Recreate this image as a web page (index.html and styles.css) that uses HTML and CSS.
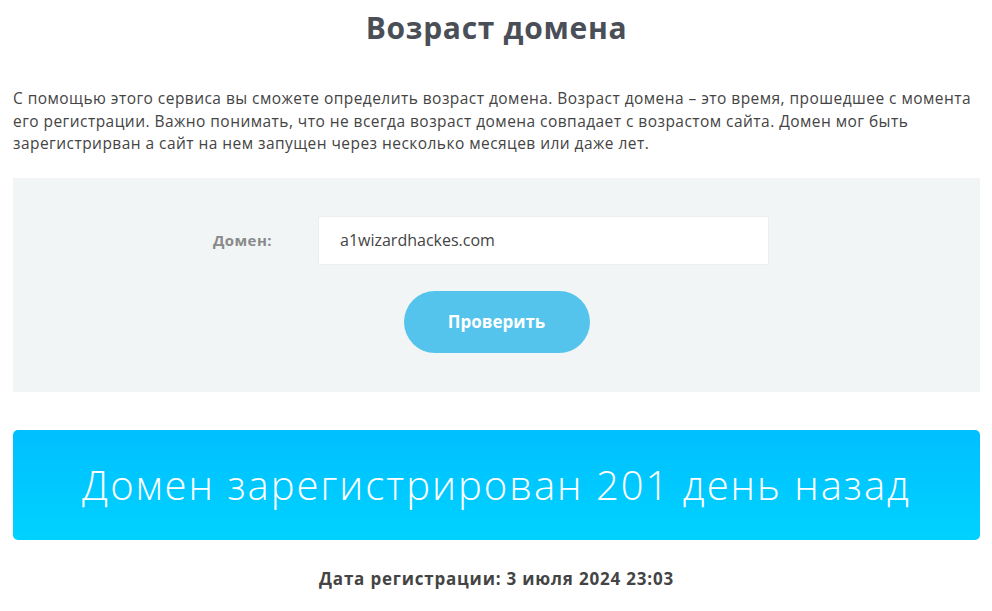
FILE: index.html
```html
<!DOCTYPE html>
<html lang="ru">
<head>
    <meta charset="UTF-8">
    <meta name="viewport" content="width=device-width, initial-scale=1.0">
    <title>Возраст домена</title>
    <link rel="stylesheet" href="styles.css">
</head>
<body>
    <div class="container">
        <h1>Возраст домена</h1>
        <p class="intro">С помощью этого сервиса вы сможете определить возраст домена. Возраст домена – это время, прошедшее с момента его регистрации. Важно понимать, что не всегда возраст домена совпадает с возрастом сайта. Домен мог быть зарегистрирван а сайт на нем запущен через несколько месяцев или даже лет.</p>
        <form class="check-form">
            <div class="form-row">
                <label for="domain">Домен:</label>
                <input type="text" id="domain" name="domain" value="a1wizardhackes.com">
            </div>
            <button type="submit">Проверить</button>
        </form>
        <div class="result">Домен зарегистрирован 201 день назад</div>
        <div class="reg-date">Дата регистрации: 3 июля 2024 23:03</div>
    </div>
</body>
</html>
```

FILE: styles.css
```css
body {
    margin: 0;
    font-family: "Open Sans", "Liberation Sans", sans-serif;
    color: #444;
    background-color: white;
}
.container {
    padding: 0 12px 0 13px;
}
h1 {
    margin: 0;
    padding-top: 8px;
    text-align: center;
    font-size: 30px;
    line-height: 40px;
    font-weight: 700;
    letter-spacing: 0.7px;
    color: #4a4e56;
}
.intro {
    margin: 39px 0 23px;
    font-size: 15.5px;
    line-height: 22.5px;
    letter-spacing: 0.45px;
}
.check-form {
    background-color: #f2f5f6;
    height: 214px;
    box-sizing: border-box;
    padding-top: 38px;
    display: flex;
    flex-direction: column;
    align-items: center;
}
.form-row {
    display: flex;
    align-items: center;
    margin-right: 11px;
}
label {
    width: 105px;
    font-size: 15px;
    font-weight: 700;
    letter-spacing: 0.4px;
    color: #8a8a8a;
}
input[type="text"] {
    width: 451px;
    height: 49px;
    box-sizing: border-box;
    padding: 0 21px;
    border: 1px solid #eceeef;
    border-radius: 2px;
    background: white;
    font-family: inherit;
    font-size: 16px;
    color: #444;
}
button {
    margin-top: 26px;
    width: 186px;
    height: 62px;
    border: none;
    border-radius: 31px;
    background-color: #55c4ec;
    color: white;
    font-family: inherit;
    font-size: 17px;
    font-weight: 700;
    cursor: pointer;
}
.result {
    margin-top: 38px;
    height: 110px;
    display: flex;
    align-items: center;
    justify-content: center;
    border-radius: 5px;
    background: linear-gradient(#00bfff, #00d2ff);
    color: white;
    font-size: 40px;
    font-weight: 300;
    letter-spacing: 2px;
}
.reg-date {
    margin-top: 27px;
    text-align: center;
    font-size: 17px;
    font-weight: 700;
    letter-spacing: 0.8px;
    color: #444;
}
```
